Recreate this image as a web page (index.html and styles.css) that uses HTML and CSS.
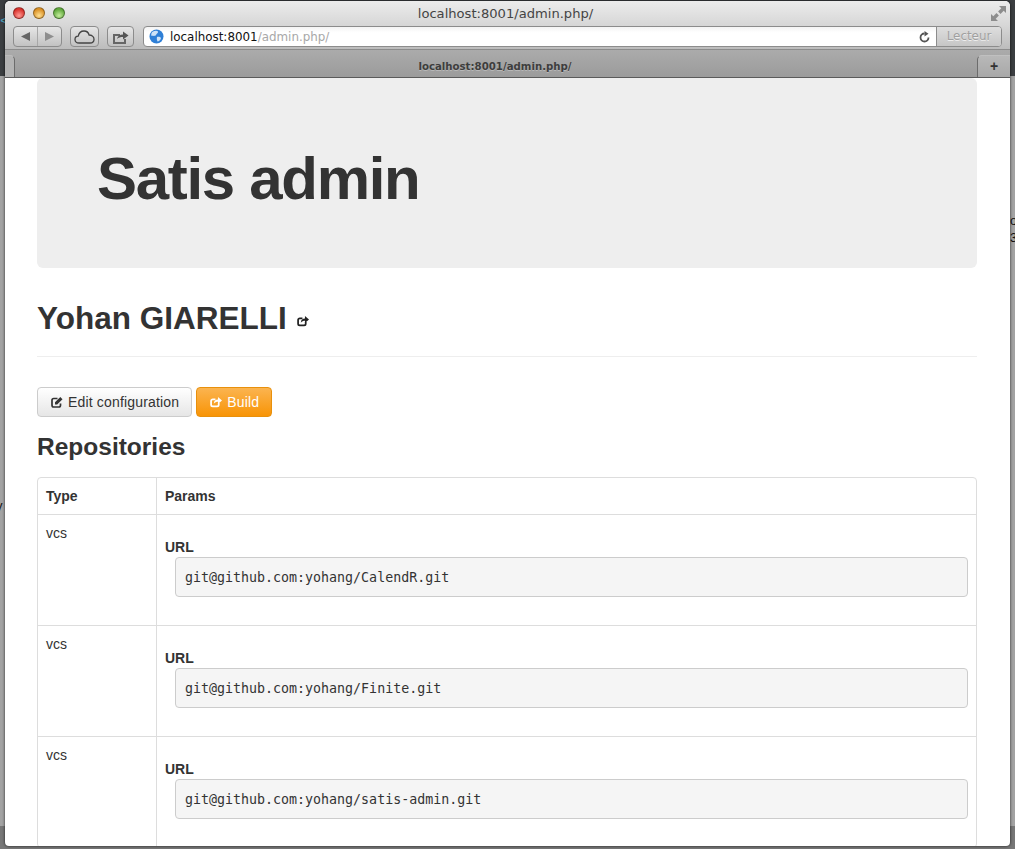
FILE: index.html
```html
<!DOCTYPE html>
<html lang="en">
<head>
    <meta charset="UTF-8">
    <title>Satis admin</title>
    <link rel="stylesheet" href="styles.css">
</head>
<body>
    <span class="stray stray-left-top">&lt;</span>
    <span class="stray stray-left">y</span>
    <span class="stray stray-right">ot<br>3-</span>

    <div class="window">
        <div class="titlebar">
            <div class="lights">
                <span class="light light-red"></span>
                <span class="light light-yellow"></span>
                <span class="light light-green"></span>
            </div>
            <div class="window-title">localhost:8001/admin.php/</div>
            <svg class="expand" width="15" height="15" viewBox="0 0 15 15">
                <path d="M8 0h7v7l-2.300-2.300-3.200 3.200-2.400-2.400 3.200-3.200zM7 15H0V8l2.300 2.300 3.200-3.200 2.400 2.400-3.200 3.200z" fill="#8d8d8d"/>
            </svg>
        </div>

        <div class="toolbar">
            <div class="tool-btn nav-btn">
                <span class="nav-half">
                    <svg width="11" height="11" viewBox="0 0 11 11"><path d="M10 1v9L1 5.500z" fill="#666"/></svg>
                </span>
                <span class="nav-half">
                    <svg width="11" height="11" viewBox="0 0 11 11"><path d="M1 1v9l9-4.500z" fill="#8e8e8e"/></svg>
                </span>
            </div>
            <div class="tool-btn cloud-btn">
                <svg width="21" height="14" viewBox="0 0 21 14"><path d="M5 13C2.500 13 1 11.500 1 9.500 1 7.500 2.500 6.200 4.200 6.200 4.800 3.200 7.200 1 10 1c2.600 0 4.500 1.700 5.100 4 2.700 0 4.900 1.800 4.900 4.200 0 2.200-1.700 3.800-4 3.800z" fill="none" stroke="#444" stroke-width="1.300"/></svg>
            </div>
            <div class="tool-btn share-btn">
                <svg width="17" height="14" viewBox="0 0 17 14"><path d="M1 4h7v2H3v6h9V9h2v5H1z" fill="#666"/><path d="M5 9c.5-3 3-4.500 6-4.500V1.500L16.500 5.500 11 9.500V7C8.500 7 6.500 7.500 5 9z" fill="#555"/></svg>
            </div>
            <div class="address-bar">
                <svg class="globe" width="15" height="15" viewBox="0 0 15 15">
                    <circle cx="7.500" cy="7.500" r="7" fill="#2f7fd6"/>
                    <path d="M4 2.500c2-1 4-1 5 0 .5 1.500-1.500 2-2 3.500-1 1.500-3 .5-4.500 1C1.800 5 2.500 3.500 4 2.500zM8 8c1.500-.5 3.500 0 4 1-.5 2-2 3.500-3.500 3.500C8 11.500 7.500 9.500 8 8z" fill="#cfe3f7"/>
                </svg>
                <span class="url-host">localhost:8001</span><span class="url-path">/admin.php/</span>
                <svg class="reload" width="11" height="12" viewBox="0 0 11 12"><path d="M5.500 2.500a4 4 0 1 0 4 4" fill="none" stroke="#555" stroke-width="1.800"/><path d="M5.500 0l4 2.700-4 2.700z" fill="#555"/></svg>
                <div class="reader-btn">Lecteur</div>
            </div>
        </div>

        <div class="tabbar">
            <div class="tab-edge"></div>
            <div class="tab-title">localhost:8001/admin.php/</div>
            <div class="tab-new">+</div>
        </div>

        <div class="page">
            <div class="hero">
                <h1>Satis admin</h1>
            </div>

            <div class="page-header">
                <h1>Yohan GIARELLI</h1>
                <svg class="icon-share" width="12" height="12" viewBox="0 0 11 11"><path d="M8 6.500V8a1.500 1.500 0 0 1-1.500 1.500h-4A1.500 1.500 0 0 1 1 8V4.500A1.500 1.500 0 0 1 2.500 3H5" fill="none" stroke="currentColor" stroke-width="1.600"/><path d="M3.500 7c0-2.500 1.800-3.800 3.800-3.800V1L11 4.200 7.300 7.400V5.200C5.800 5.200 4.500 5.700 3.500 7z" fill="currentColor"/></svg>
            </div>

            <div class="actions">
                <a class="btn" href="#">
                    <svg class="btn-icon" width="12" height="12" viewBox="0 0 12 12"><path d="M9.500 7.500v1.800A1.700 1.700 0 0 1 7.800 11H2.700A1.700 1.700 0 0 1 1 9.300V4.200A1.700 1.700 0 0 1 2.700 2.500H6.500" fill="none" stroke="currentColor" stroke-width="1.700"/><path d="M4 6.300L9.300 1 11.500 3.200 6.200 8.500H4z" fill="currentColor"/></svg>
                    Edit configuration
                </a>
                <a class="btn btn-warning" href="#">
                    <svg class="btn-icon" width="12" height="12" viewBox="0 0 11 11"><path d="M8 6.500V8a1.500 1.500 0 0 1-1.500 1.500h-4A1.500 1.500 0 0 1 1 8V4.500A1.500 1.500 0 0 1 2.500 3H5" fill="none" stroke="currentColor" stroke-width="1.600"/><path d="M3.500 7c0-2.500 1.800-3.800 3.800-3.800V1L11 4.200 7.300 7.400V5.200C5.800 5.200 4.500 5.700 3.500 7z" fill="currentColor"/></svg>
                    Build
                </a>
            </div>

            <h3>Repositories</h3>

            <table class="repos">
                <thead>
                    <tr><th class="col-type">Type</th><th>Params</th></tr>
                </thead>
                <tbody>
                    <tr>
                        <td>vcs</td>
                        <td><strong>URL</strong><pre>git@github.com:yohang/CalendR.git</pre></td>
                    </tr>
                    <tr>
                        <td>vcs</td>
                        <td><strong>URL</strong><pre>git@github.com:yohang/Finite.git</pre></td>
                    </tr>
                    <tr>
                        <td>vcs</td>
                        <td><strong>URL</strong><pre>git@github.com:yohang/satis-admin.git</pre></td>
                    </tr>
                </tbody>
            </table>
        </div>
    </div>
</body>
</html>
```

FILE: styles.css
```css
html, body {
    height: 100%;
}

body {
    margin: 0;
    overflow: hidden;
    background: linear-gradient(#3b3e41 0, #3b3e41 76px, #a3a3a3 76px, #a3a3a3 826px, #777 826px);
    font-family: "Liberation Sans", Arial, sans-serif;
    color: #333;
}

/* bits of the window behind */
.stray {
    position: absolute;
    font-size: 13px;
    line-height: 17px;
    color: #111;
}

.stray-left-top {
    left: 0;
    top: 12px;
    font-size: 17px;
    color: #4a9bb5;
}

.stray-left {
    left: -4px;
    top: 497px;
}

.stray-right {
    left: 1010px;
    top: 212px;
}

.window {
    position: absolute;
    left: 5px;
    top: 1px;
    width: 1005px;
    height: 845px;
    overflow: hidden;
    display: flex;
    flex-direction: column;
    background-color: #fff;
    border-radius: 5px 5px 4px 4px;
    box-shadow: 0 0 3px rgba(0, 0, 0, 0.8);
}

.titlebar {
    flex: none;
    height: 25px;
    display: flex;
    align-items: center;
    justify-content: center;
    position: relative;
    background: linear-gradient(#ececec, #d6d6d6);
}

.lights {
    position: absolute;
    left: 8px;
    top: 6px;
    display: flex;
    gap: 8px;
}

.light {
    width: 12px;
    height: 12px;
    border-radius: 50%;
    border: 1px solid rgba(0, 0, 0, 0.35);
    box-sizing: border-box;
}

.light-red {
    background: radial-gradient(circle at 50% 75%, #ff9a94, #d8322c 70%);
}

.light-yellow {
    background: radial-gradient(circle at 50% 75%, #ffdf90, #d98f24 70%);
}

.light-green {
    background: radial-gradient(circle at 50% 75%, #c4ec9c, #5fa83c 70%);
}

.window-title {
    font-family: "DejaVu Sans", sans-serif;
    font-size: 13.100px;
    color: #444;
    padding-right: 4px;
}

.expand {
    position: absolute;
    right: 4px;
    top: 5px;
}

.toolbar {
    flex: none;
    height: 22px;
    padding: 0 8px 1px 8px;
    display: flex;
    align-items: stretch;
    background: linear-gradient(#d6d6d6, #bcbcbc);
}

.tool-btn {
    display: flex;
    align-items: center;
    justify-content: center;
    height: 21px;
    box-sizing: border-box;
    border: 1px solid #8c8c8c;
    border-radius: 4px;
    background: linear-gradient(#e6e6e6, #c2c2c2);
}

.nav-btn {
    width: 49px;
}

.nav-half {
    flex: 1;
    display: flex;
    align-items: center;
    justify-content: center;
    height: 100%;
}

.nav-half + .nav-half {
    border-left: 1px solid #a8a8a8;
}

.cloud-btn {
    width: 29px;
    margin-left: 8px;
}

.share-btn {
    width: 27px;
    margin-left: 8px;
}

.address-bar {
    flex: 1;
    margin-left: 9px;
    height: 21px;
    box-sizing: border-box;
    display: flex;
    align-items: center;
    padding-left: 5px;
    background: linear-gradient(#f4f4f4, #fff 30%);
    border: 1px solid #8c8c8c;
    border-radius: 4px;
    font-family: "DejaVu Sans", sans-serif;
    font-size: 11.900px;
    overflow: hidden;
}

.globe {
    margin-right: 6px;
}

.url-host {
    color: #111;
}

.url-path {
    color: #a8a8a8;
}

.reload {
    margin-left: auto;
    margin-right: 6px;
}

.reader-btn {
    width: 64px;
    height: 100%;
    line-height: 19px;
    text-align: center;
    color: #a0a0a0;
    text-shadow: 0 1px 0 #eee;
    border-left: 1px solid #8c8c8c;
    background: linear-gradient(#dedede, #c6c6c6);
}

.tabbar {
    flex: none;
    height: 29px;
    box-sizing: border-box;
    position: relative;
    display: flex;
    align-items: center;
    justify-content: center;
    padding-right: 25px;
    background: linear-gradient(#ababab, #9b9b9b);
    border-top: 1px solid #8c8c8c;
    border-bottom: 1px solid #5a5a5a;
}

.tab-edge {
    position: absolute;
    left: 0;
    top: 5px;
    bottom: 0;
    width: 9px;
    border-right: 1px solid #6c6c6c;
    border-top: 1px solid #bcbcbc;
    border-radius: 0 5px 0 0;
    background: #b4b4b4;
}

.tab-title {
    font-family: "DejaVu Sans", sans-serif;
    font-size: 10.200px;
    font-weight: bold;
    color: #3d3d3d;
    text-shadow: 0 1px 0 #b8b8b8;
    padding-top: 5px;
}

.tab-new {
    position: absolute;
    right: 0;
    top: 5px;
    bottom: 0;
    width: 33px;
    box-sizing: border-box;
    border-left: 1px solid #6c6c6c;
    border-top: 1px solid #c0c0c0;
    border-radius: 5px 0 0 0;
    background: linear-gradient(#b8b8b8, #a8a8a8);
    text-align: center;
    font-size: 14px;
    font-weight: bold;
    line-height: 20px;
    color: #333;
}

.page {
    flex: 1;
    padding: 0 33px 0 32px;
    overflow: hidden;
}

.hero {
    height: 190px;
    box-sizing: border-box;
    padding-left: 60px;
    display: flex;
    align-items: center;
    background-color: #eee;
    border-radius: 6px;
}

.hero h1 {
    margin: 0;
    font-size: 60px;
    letter-spacing: -1.300px;
    line-height: 60px;
    color: #333;
    position: relative;
    top: 6px;
}

.page-header {
    height: 89px;
    box-sizing: border-box;
    padding-top: 30px;
    display: flex;
    align-items: flex-start;
    border-bottom: 1px solid #eee;
}

.page-header h1 {
    margin: 0;
    font-size: 31.500px;
    line-height: 40px;
}

.icon-share {
    margin: 17px 0 0 10px;
    color: #222;
}

.actions {
    display: flex;
    gap: 4px;
    margin-top: 30px;
}

.btn {
    display: flex;
    align-items: center;
    gap: 5px;
    height: 30px;
    box-sizing: border-box;
    padding: 0 12px 0 13px;
    font-size: 14px;
    letter-spacing: 0.170px;
    color: #333;
    text-decoration: none;
    border: 1px solid #ccc;
    border-radius: 4px;
    background: linear-gradient(#fff, #e6e6e6);
}

.btn-warning {
    color: #fff;
    border-color: #e8900c;
    background: linear-gradient(#fbb450, #f89406);
}

h3 {
    margin: 15px 0 15px;
    font-size: 24.500px;
    line-height: 30px;
}

.repos {
    width: 100%;
    border-collapse: separate;
    border-spacing: 0;
    border: 1px solid #ddd;
    border-radius: 4px;
    font-size: 14px;
    table-layout: fixed;
}

.repos th,
.repos td {
    text-align: left;
    vertical-align: top;
    padding: 8px;
    line-height: 20px;
    border-left: 1px solid #ddd;
}

.repos th:first-child,
.repos td:first-child {
    border-left: none;
}

.repos td {
    border-top: 1px solid #ddd;
}

.col-type {
    width: 102px;
}

.repos td + td {
    padding-top: 22px;
    padding-bottom: 28px;
}

.repos pre {
    margin: 0 0 0 10px;
    padding: 10px 9px 8px;
    height: 40px;
    box-sizing: border-box;
    font-family: "DejaVu Sans Mono", monospace;
    font-size: 13.300px;
    line-height: 20px;
    color: #333;
    background-color: #f5f5f5;
    border: 1px solid #ccc;
    border-radius: 4px;
}
```
